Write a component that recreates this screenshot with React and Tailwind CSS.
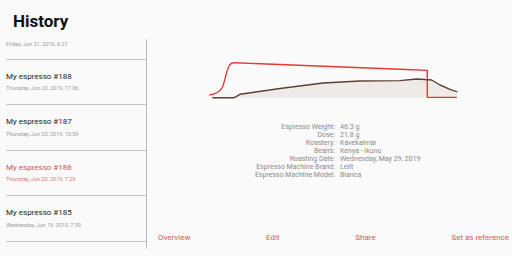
import React from "react";

const rows = [
  { title: "My espresso #188", date: "Thursday, Jun 20, 2019, 17:06" },
  { title: "My espresso #187", date: "Thursday, Jun 20, 2019, 15:59" },
  { title: "My espresso #186", date: "Thursday, Jun 20, 2019, 7:29", selected: true },
  { title: "My espresso #185", date: "Wednesday, Jun 19, 2019, 7:39" },
];

const details = [
  ["Espresso Weight:", "46.3 g"],
  ["Dose:", "21.8 g"],
  ["Roastery:", "Kávékalmár"],
  ["Beans:", "Kenya - Ikunu"],
  ["Roasting Date:", "Wednesday, May 29, 2019"],
  ["Espresso Machine Brand:", "Lelit"],
  ["Espresso Machine Model:", "Bianca"],
];

function Chart() {
  const brown =
    "M212.3,97.7 L234.3,97.7 L240,94.3 L280,88.5 L323,83 L360,81 L400,80.6 L416.7,79 L431.7,80 L440,85 L450,89.3 L457.3,91.8";
  const fill =
    "M234.3,97.7 L240,94.3 L280,88.5 L323,83 L360,81 L400,80.6 L416.7,79 L431.7,80 L440,85 L450,89.3 L457.3,91.8 L457.3,97.7 Z";
  const red =
    "M209.3,95 C215,94.5 219.5,92.5 222.5,87 C225,81 226.5,70 229.5,65 C231,63 232.5,62.7 235,62.8 L400,69.3 L427.3,70.4 L427.3,97.4 L456.8,97.4";
  return (
    <svg width="265" height="50" viewBox="200 55 265 50" className="block">
      <path d={fill} fill="#eeeae7" />
      <path d={brown} fill="none" stroke="#5d4037" strokeWidth="1.4" strokeLinejoin="round" />
      <path d={red} fill="none" stroke="#e53935" strokeWidth="1.4" strokeLinejoin="round" />
    </svg>
  );
}

export default function App() {
  return (
    <div
      className="w-[512px] h-[256px] bg-[#fafafa] flex flex-col overflow-hidden"
      style={{ fontFamily: "Roboto, 'Liberation Sans', sans-serif" }}
    >
      <div className="h-[39px] pl-[13px] pt-[11px] text-[17px] leading-[20px] font-bold text-[#111]">
        History
      </div>
      <div className="flex">
        <div className="w-[147px] h-[210px] pl-[6px] border-r border-[#bdbdbd] overflow-hidden">
          <div className="h-[20.7px] border-b border-[#c4c4c4] pt-[1.5px]">
            <div className="text-[5.5px] leading-[7px] text-[#9a9a9a]">
              Friday, Jun 21, 2019, 6:27
            </div>
          </div>
          {rows.map((r) => (
            <div
              key={r.title}
              className="h-[45.5px] border-b border-[#c4c4c4] flex flex-col justify-center gap-[3.7px]"
            >
              <div
                className={`text-[8px] leading-[10px] ${r.selected ? "text-[#cf5552]" : "text-[#222]"}`}
              >
                {r.title}
              </div>
              <div
                className={`text-[5.5px] leading-[7px] ${r.selected ? "text-[#d27a78]" : "text-[#9a9a9a]"}`}
              >
                {r.date}
              </div>
            </div>
          ))}
        </div>
        <div className="flex-1 flex flex-col">
          <div className="pl-[53px] pt-[16px]">
            <Chart />
          </div>
          <div className="mt-[18px] grid grid-cols-[188px_1fr] gap-x-[5px] text-[7px] leading-[8.07px] text-[#8a8a8a]">
            {details.map(([k, v]) => (
              <React.Fragment key={k}>
                <div className="text-right">{k}</div>
                <div>{v}</div>
              </React.Fragment>
            ))}
          </div>
          <div className="mt-[54px] pl-[11px] pr-[3px] flex justify-between text-[8px] leading-[10px] text-[#d35a56]">
            <span>Overview</span>
            <span>Edit</span>
            <span>Share</span>
            <span>Set as reference</span>
          </div>
        </div>
      </div>
    </div>
  );
}
